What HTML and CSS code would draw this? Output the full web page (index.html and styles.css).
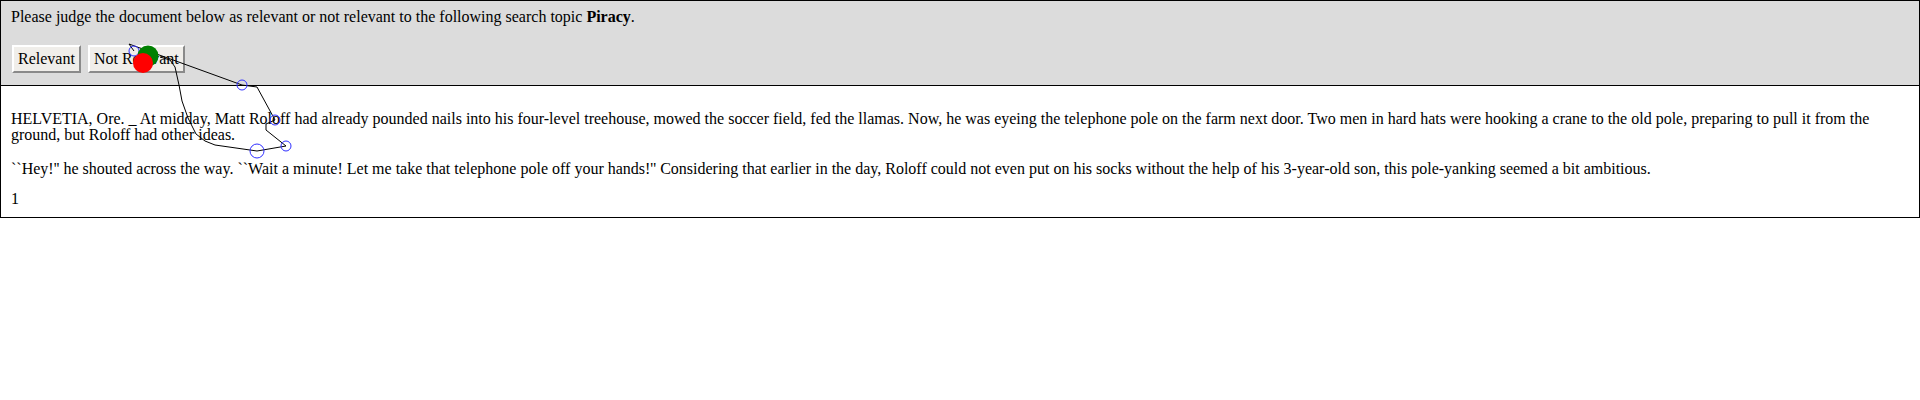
FILE: index.html
```html
<!DOCTYPE html>
<html>
<head>
<meta charset="utf-8">
<link rel="stylesheet" href="styles.css">
</head>
<body>
<div class="page">
  <div class="header">
    <p class="prompt">Please judge the document below as relevant or not relevant to the following search topic <b>Piracy</b>.</p>
    <div class="buttons">
      <button class="btn">Relevant</button>
      <button class="btn">Not Relevant</button>
    </div>
  </div>
  <div class="doc">
    <p class="para first">HELVETIA, Ore. _ At midday, Matt Roloff had already pounded nails into his four-level treehouse, mowed the soccer field, fed the llamas. Now, he was eyeing the telephone pole on the farm next door. Two men in hard hats were hooking a crane to the old pole, preparing to pull it from the ground, but Roloff had other ideas.</p>
    <p class="para">``Hey!'' he shouted across the way. ``Wait a minute! Let me take that telephone pole off your hands!'' Considering that earlier in the day, Roloff could not even put on his socks without the help of his 3-year-old son, this pole-yanking seemed a bit ambitious.</p>
    <div class="pagenum">1</div>
  </div>
  <svg class="trace" width="320" height="180" viewBox="0 0 320 180">
    <polyline class="path" points="134,51 129,44 242,85 257,87 275,120 266,124 266,130 286,146 257,151 215,145 205,141 196,134 188,118 182,101 179,85 175,67 170,60 160,57"/>
    <circle class="pt" cx="134" cy="51" r="5"/>
    <circle class="pt" cx="242" cy="85" r="5"/>
    <circle class="pt" cx="275" cy="120" r="5"/>
    <circle class="pt" cx="286" cy="146" r="5"/>
    <circle class="pt big" cx="257" cy="151" r="7"/>
    <circle class="green" cx="148" cy="56" r="10.5"/>
    <circle class="red" cx="143" cy="63" r="10"/>
  </svg>
</div>
</body>
</html>
```

FILE: styles.css
```css
html, body {
  margin: 0;
  padding: 0;
  background: #ffffff;
}
body {
  font-family: "Liberation Serif", "Times New Roman", serif;
  font-size: 16px;
  color: #000000;
}
.page {
  position: relative;
  width: 1920px;
}
.header {
  background: #dcdcdc;
  border: 1px solid #000000;
  padding: 7px 10px 12px 10px;
}
.prompt {
  margin: 0;
  line-height: 18px;
}
.buttons {
  margin-top: 19px;
  display: flex;
  gap: 7px;
  padding-left: 1px;
}
.btn {
  font-family: "Liberation Serif", "Times New Roman", serif;
  font-size: 16px;
  line-height: 18px;
  color: #000000;
  background: #f0eeea;
  border: 2px solid;
  border-color: #ffffff #8a8a8a #8a8a8a #ffffff;
  padding: 3px 4px 3px 4px;
  margin: 0;
}
.doc {
  border: 1px solid #000000;
  border-top: none;
  padding: 8px 10px 10px 10px;
}
.para {
  margin: 18px 0 0 0;
  line-height: 16px;
}
.para.first {
  margin-top: 17px;
}
.pagenum {
  margin-top: 14px;
  line-height: 16px;
}
.trace {
  position: absolute;
  left: 0;
  top: 0;
  overflow: visible;
}
.path {
  fill: none;
  stroke: #000000;
  stroke-width: 1;
}
.pt {
  fill: none;
  stroke: #3030ff;
  stroke-width: 1;
}
.green {
  fill: #008000;
}
.red {
  fill: #ff0000;
}
```
